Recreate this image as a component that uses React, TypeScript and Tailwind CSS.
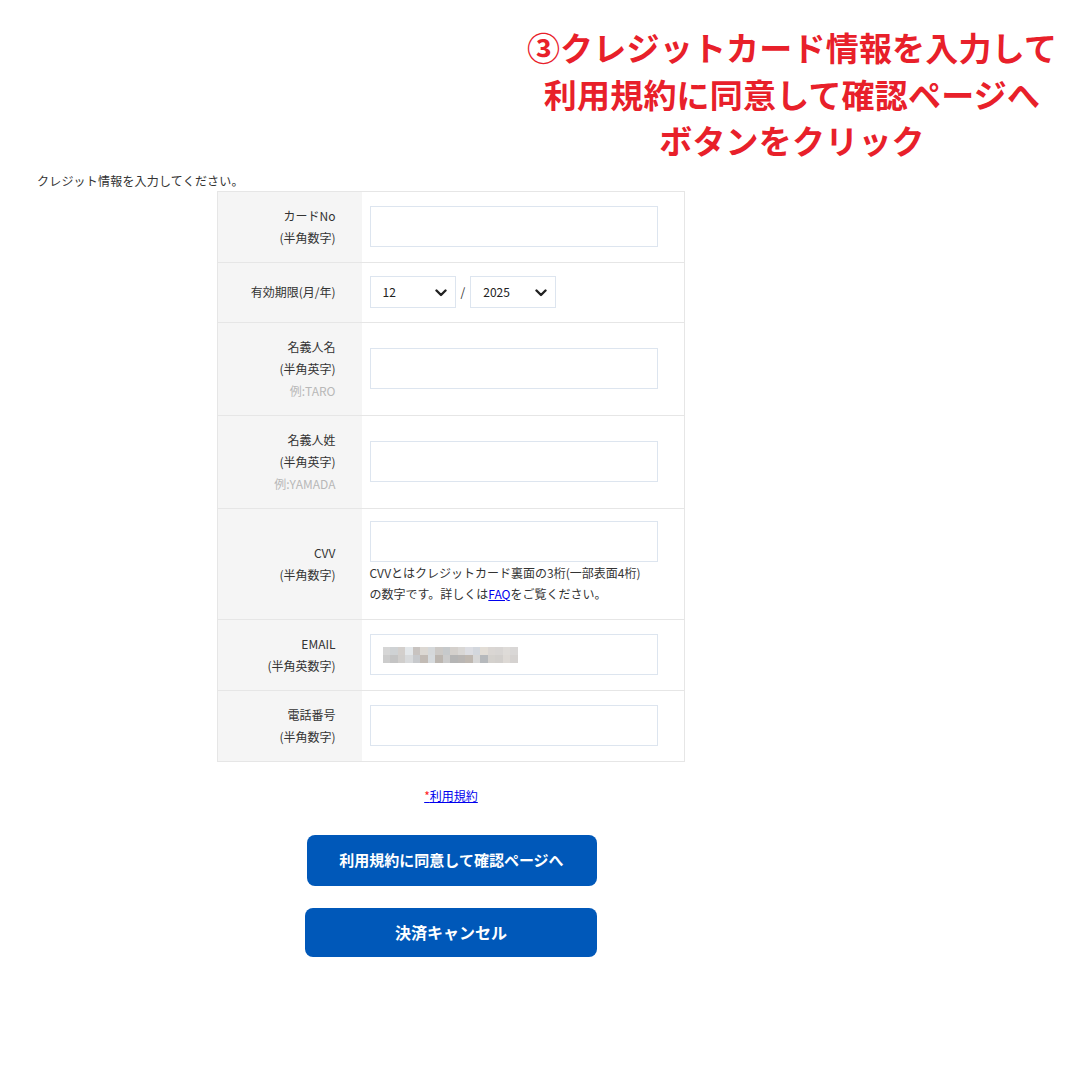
import React from "react";

const jp = { fontFamily: '"Noto Sans CJK JP", "Noto Sans", sans-serif' };

const blurTop = ["#d6d6d6","#cfd2d4","#d3cfcc","#e3e7ea","#c8c3c0","#dcd8d3","#d5d8da","#ccc9c6","#c6c9cb","#d4d0cc","#d9d7d5","#dcdde2","#d3d7dd","#e2ddd6","#dad6d3","#d8d5d3","#dedbd8","#d9d7d6"];
const blurBot = ["#cccccc","#c4c4c4","#d0cecc","#d8dadc","#c7c9cc","#c2bbb5","#d6dadd","#bcb6b0","#cbcbcb","#b5b5b5","#b9b6b4","#bfb8b1","#d7d7d7","#b6b9bc","#d4d1cd","#d2cfcc","#ddd9d5","#d5d2d0"];

function Chevron() {
  return (
    <svg width="12" height="8" viewBox="0 0 12 8" className="absolute right-[8px] top-[12px] pointer-events-none">
      <path d="M1.5 1.5 L6 6 L10.5 1.5" fill="none" stroke="#222" strokeWidth="2.4" strokeLinecap="round" strokeLinejoin="round" />
    </svg>
  );
}

function Select({ value }: { value: string }) {
  return (
    <div className="relative w-[86px] h-[32px] border border-[#dde5ef] bg-white flex items-center pl-[12px] text-[12px] text-[#222]">
      {value}
      <Chevron />
    </div>
  );
}

function TextInput({ children }: { children?: React.ReactNode }) {
  return (
    <div className="w-[288px] h-[41px] border border-[#dde5ef] bg-white flex items-center pl-[12px]">
      {children}
    </div>
  );
}

function Label({ lines, example }: { lines: string[]; example?: string }) {
  return (
    <div className="text-right text-[12px] leading-[22px] text-[#333]">
      {lines.map((l) => (
        <div key={l}>{l}</div>
      ))}
      {example && <div className="text-[#b8b8b8]">{example}</div>}
    </div>
  );
}

export default function App() {
  const rows: { h: string; label: React.ReactNode; field: React.ReactNode }[] = [
    { h: "h-[71px]", label: <Label lines={["カードNo", "(半角数字)"]} />, field: <TextInput /> },
    {
      h: "h-[60px]",
      label: <Label lines={["有効期限(月/年)"]} />,
      field: (
        <div className="flex items-center gap-[5px]">
          <Select value="12" />
          <span className="text-[12px] text-[#333]">/</span>
          <Select value="2025" />
        </div>
      ),
    },
    { h: "h-[93px]", label: <Label lines={["名義人名", "(半角英字)"]} example="例:TARO" />, field: <TextInput /> },
    { h: "h-[93px]", label: <Label lines={["名義人姓", "(半角英字)"]} example="例:YAMADA" />, field: <TextInput /> },
    {
      h: "h-[111px]",
      label: <Label lines={["CVV", "(半角数字)"]} />,
      field: (
        <div className="pt-[1px] pb-[4px]">
          <TextInput />
          <div className="text-[12px] leading-[21px] text-[#333] mt-0">
            <div>CVVとはクレジットカード裏面の3桁(一部表面4桁)</div>
            <div>
              の数字です。詳しくは<span className="text-[#0000ee] underline">FAQ</span>をご覧ください。
            </div>
          </div>
        </div>
      ),
    },
    {
      h: "h-[71px]",
      label: <Label lines={["EMAIL", "(半角英数字)"]} />,
      field: (
        <TextInput>
          <div className="flex flex-col">
            <div className="flex">
              {blurTop.map((c, i) => (
                <div key={i} className="w-[7.5px] h-[8px]" style={{ backgroundColor: c }} />
              ))}
            </div>
            <div className="flex">
              {blurBot.map((c, i) => (
                <div key={i} className="w-[7.5px] h-[8px]" style={{ backgroundColor: c }} />
              ))}
            </div>
          </div>
        </TextInput>
      ),
    },
    { h: "h-[71px]", label: <Label lines={["電話番号", "(半角数字)"]} />, field: <TextInput /> },
  ];

  return (
    <div className="w-[1080px] h-[1080px] bg-white overflow-hidden" style={jp}>
      <div className="ml-auto mr-[3px] w-[570px] pt-[24px] text-center text-[33px] leading-[46.5px] font-bold text-[#e8202a] tracking-[0.2px]">
        <div>③クレジットカード情報を入力して</div>
        <div>利用規約に同意して確認ページへ</div>
        <div>ボタンをクリック</div>
      </div>

      <div className="w-[902px]">
        <div className="pl-[37px] mt-[8px] text-[12px] leading-[18px] text-[#333] tracking-[0.2px]">クレジット情報を入力してください。</div>

        <table className="mx-auto mt-[1px] w-[468px] border border-[#e6e6e6] border-collapse">
          <tbody>
            {rows.map((r, i) => (
              <tr key={i} className={`${r.h} border-b border-[#e6e6e6]`}>
                <td className="w-[144px] bg-[#f5f5f5] pr-[26px] align-middle">{r.label}</td>
                <td className="pl-[8px] align-middle">{r.field}</td>
              </tr>
            ))}
          </tbody>
        </table>

        <div className="mt-[24px] text-center text-[12px] leading-[20px]">
          <span className="text-[#ff2020] underline decoration-[#0000ee]">*</span>
          <span className="text-[#0000ee] underline">利用規約</span>
        </div>

        <div className="flex flex-col items-center mt-[29px] gap-[22px]">
          <button className="w-[290px] h-[51px] rounded-[8px] bg-[#0058b9] text-white text-[15px] font-bold ml-[1px]">
            利用規約に同意して確認ページへ
          </button>
          <button className="w-[292px] h-[49px] rounded-[8px] bg-[#0058b9] text-white text-[16px] font-bold">
            決済キャンセル
          </button>
        </div>
      </div>
    </div>
  );
}
